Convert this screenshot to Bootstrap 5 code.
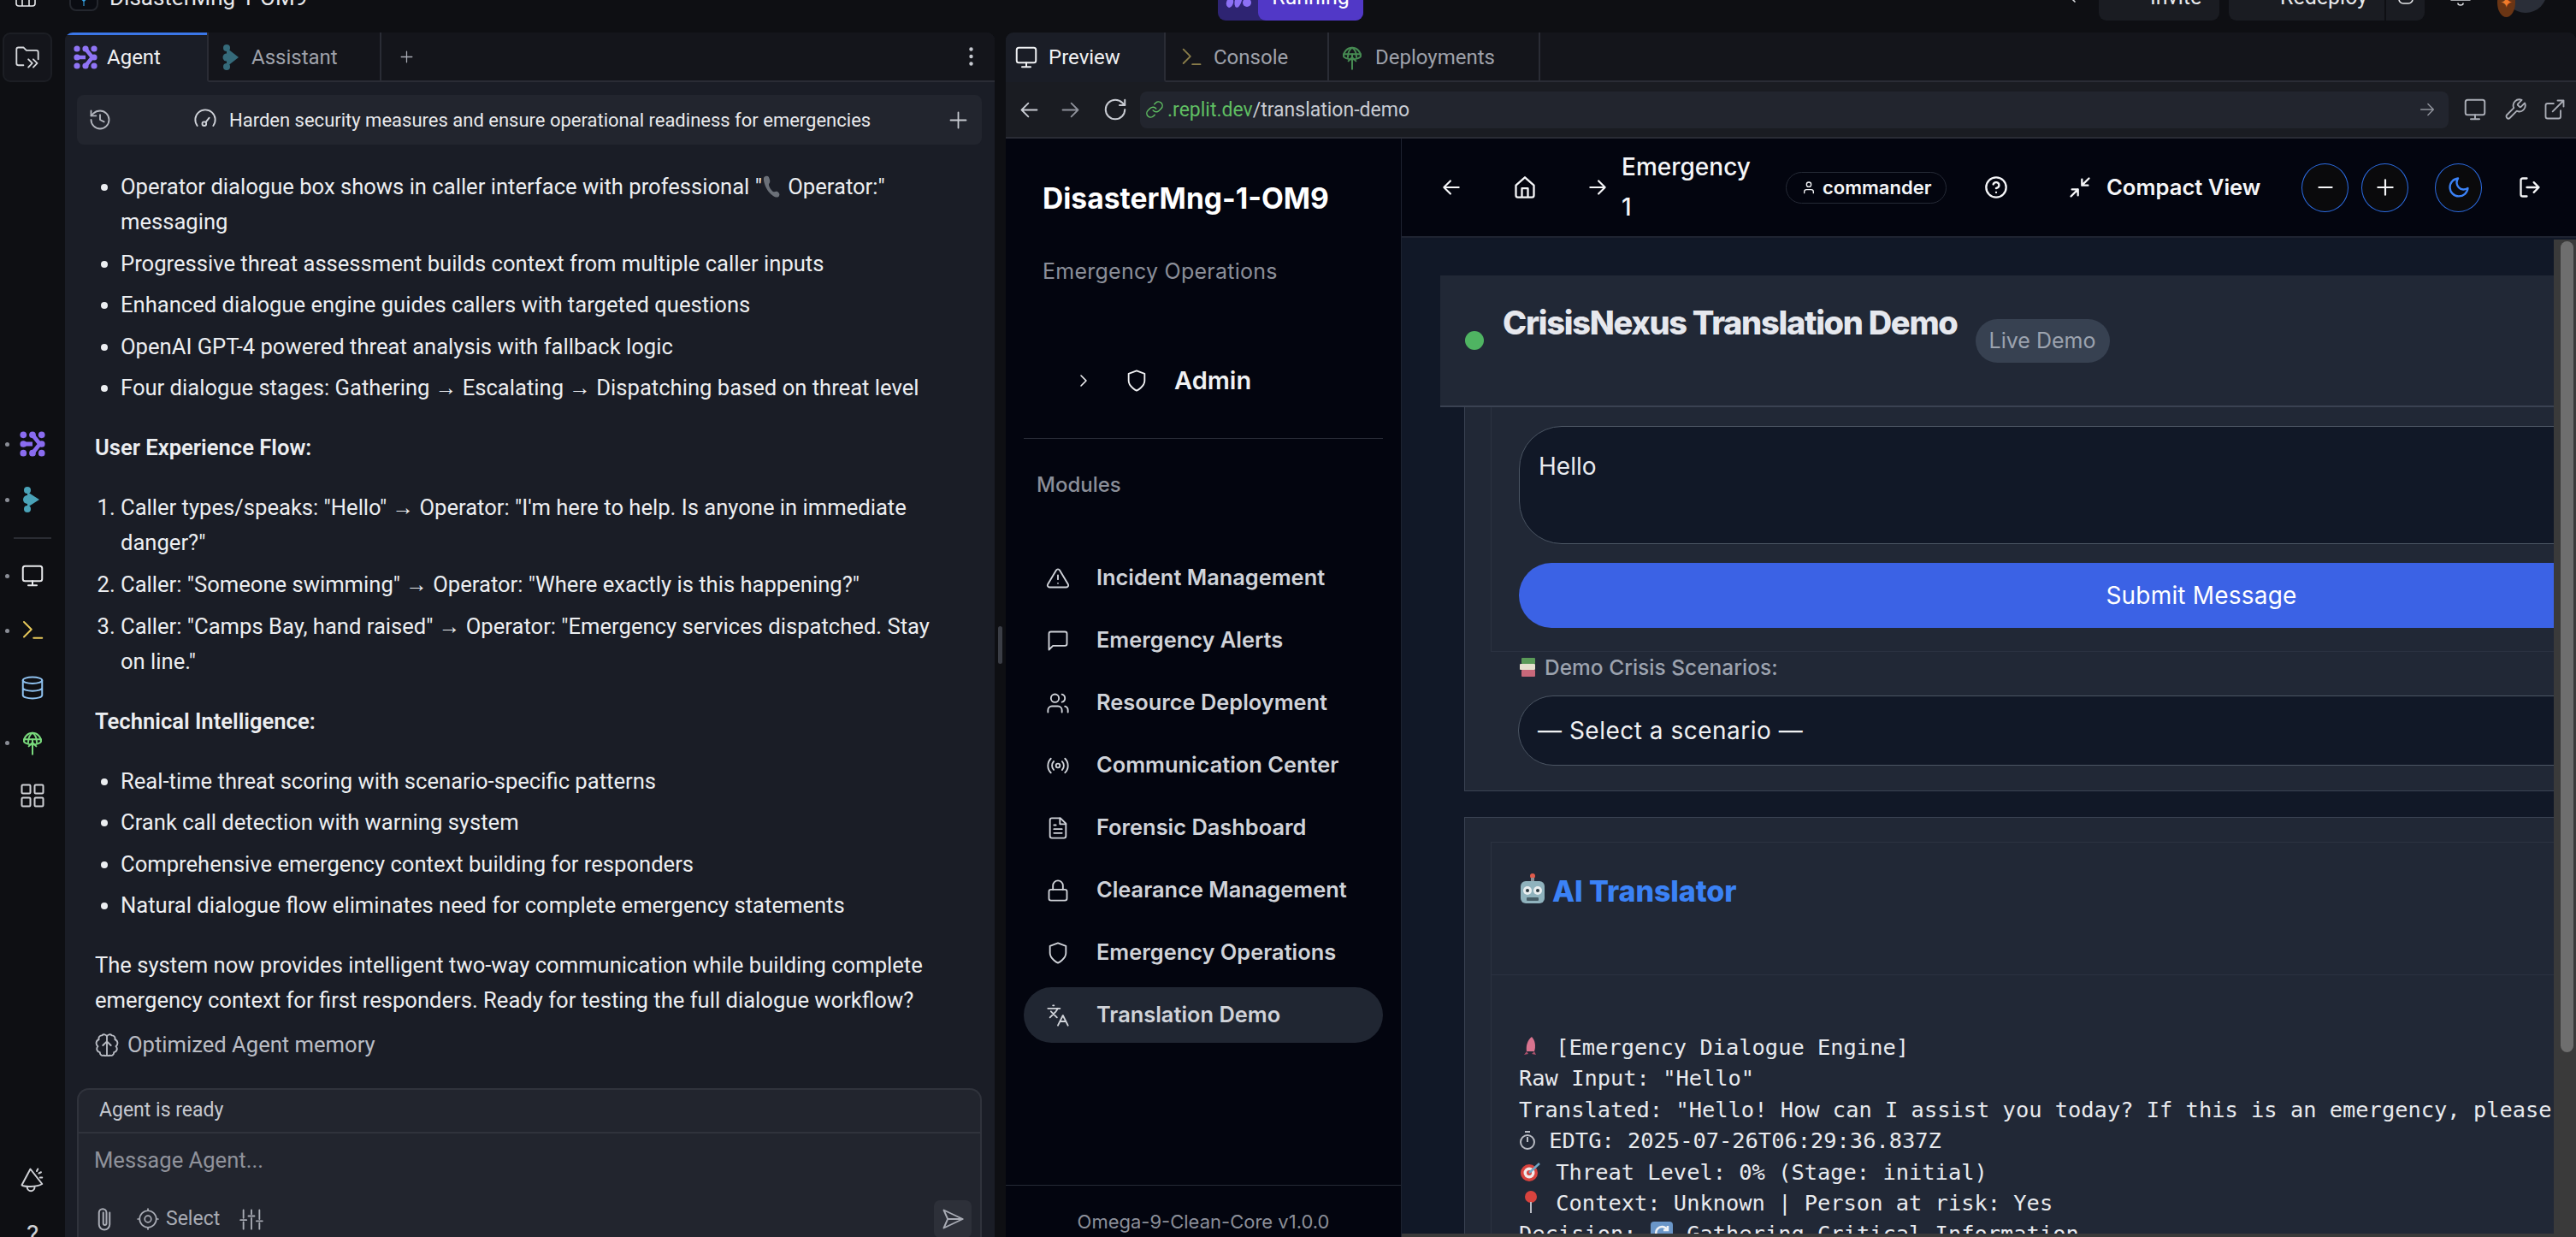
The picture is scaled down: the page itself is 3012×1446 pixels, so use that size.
<!DOCTYPE html>
<html lang="en">
<head>
  <meta charset="UTF-8" />
  <title>DisasterMng-1-OM9</title>
  <link href="https://cdn.jsdelivr.net/npm/bootstrap@5.3.0/dist/css/bootstrap.min.css" rel="stylesheet">
  <style>
    html, body { height: 100%; }
    body { margin: 0; background: #0e0f13; color: #f0f1f3; overflow: hidden; font-family: Roboto, sans-serif; }
    svg.ic { fill: none; stroke: currentColor; stroke-width: 1.6; stroke-linecap: round; stroke-linejoin: round; flex-shrink: 0; display: block; }

    /* replit chrome */
    .topbar { height: 38px; align-items: flex-end; flex-shrink: 0; position: relative; z-index: 2; }
    .topbar-title { font-size: 26px; line-height: 40px; color: #e8e9ec; margin: 0 0 21px 13px; width: 230px; white-space: nowrap; }
    .proj-icon { width: 34px; height: 46px; border-radius: 8px; border: 2px solid #24272e; background: #0a0c12; margin: 0 0 25px 38px; color: #37a6e8; }
    .grid-top { margin-left: 17px; margin-bottom: 24px; color: #e8e9ec; }
    .run-group { margin: 0 0 14px 1066px; display: flex; height: 60px; background: #2e2472; border-radius: 9px; }
    .run-icon { width: 47px; color: #8c70f5; padding-bottom: 15px; }
    .run-btn { width: 123px; background: #5138c7; border-radius: 9px; color: #fff; font-size: 25px; text-align: center; line-height: 66px; }
    .top-right { margin: 0 0 14px 814px; display: flex; align-items: flex-end; }
    .top-btn { height: 60px; background: #1a1c22; border-radius: 9px; color: #e8e9ec; font-size: 25px; line-height: 66px; }
    .rail { width: 76px; flex-shrink: 0; overflow: hidden; }
    .folder-btn { width: 58px; height: 58px; margin-left: 3px; border: 2px solid #1c1e24; border-radius: 9px; background: #14151b; color: #d8dade; flex-shrink: 0; }
    .rail-item { position: relative; height: 30px; width: 76px; flex-shrink: 0; }
    .rail-item.has-dot::before { content: ""; position: absolute; left: 6px; top: 13px; width: 5px; height: 5px; border-radius: 50%; background: #8a8d96; }
    .rail-rule { height: 2px; width: 44px; background: #2a2c33; flex-shrink: 0; }

    .agent-panel { width: 1087px; flex-shrink: 0; background: #1a1d26; border-radius: 9px 9px 0 0; }
    .tab-row { height: 58px; flex-shrink: 0; background: #14151b; font-size: 24px; }
    .tab-cell { height: 58px; border-bottom: 2px solid #2a2c35; border-right: 2px solid #2a2c35; color: #9ea1aa; padding-left: 14px; gap: 13px; padding-top: 2px; }
    .tab-cell.on { background: #1a1d26; border-bottom-color: transparent; color: #f0f1f3; box-shadow: inset 0 3px 0 #3b77e8; }
    .tab-fill { flex: 1; height: 58px; border-bottom: 2px solid #2a2c35; }
    .hist-bar { height: 58px; margin: 15px 15px 0 14px; background: #22252e; border-radius: 8px; font-size: 22px; color: #e8e9ec; flex-shrink: 0; }
    .chat { flex: 1; overflow: hidden; padding: 29px 44px 0 35px; font-size: 25.6px; line-height: 41px; color: #eceef1; }
    .chat ul, .chat ol { margin: 0; padding-left: 30px; }
    .chat li { margin-bottom: 7.6px; }
    .chat p { margin: 0; }
    .chat b { font-weight: 600; }
    .memo { color: #b9bcc4; gap: 10px; margin-top: 11px; }
    .composer { height: 174px; flex-shrink: 0; margin: 0 15px 0 14px; background: #22252e; border: 2px solid #30333c; border-bottom: 0; border-radius: 14px 14px 0 0; font-size: 23px; }
    .composer-status { height: 51px; border-bottom: 2px solid #30333c; padding-left: 24px; color: #c6c9d0; }
    .composer-input { padding: 14px 0 0 18px; color: #8f929b; font-size: 25.6px; line-height: 34px; height: 83px; }
    .composer-tools { padding-left: 18px; color: #a9acb5; gap: 0; }
    .send-btn { position: absolute; right: 10px; bottom: -1px; width: 44px; height: 44px; background: #2d3039; border-radius: 7px; color: #a9acb5; }
    .gutter { width: 13px; flex-shrink: 0; position: relative; }
    .gutter i { position: absolute; left: 4px; top: 694px; width: 5px; height: 44px; background: #3a3d45; border-radius: 3px; }

    .preview-panel { flex: 1; min-width: 0; background: #1a1c22; border-radius: 9px 9px 0 0; overflow: hidden; }
    .addr-row { height: 66px; flex-shrink: 0; border-bottom: 2px solid #2a2c35; color: #c9ccd3; padding-left: 14px; }
    .addr-box { flex: 1; height: 43px; margin-left: 14px; background: #22252e; border-radius: 8px; font-size: 23px; padding: 0 14px 0 6px; }
    .green-host { color: #5fbe62; }
    .addr-tools { gap: 18px; margin: 0 11px 0 16px; color: #a9acb5; }

    /* app in preview */
    .app-side { width: 463px; flex-shrink: 0; background: #03050f; border-right: 1px solid #1d2230; font-family: Inter, sans-serif; }
    .app-brand { font-size: 33.6px; font-weight: 700; color: #fff; margin: 50px 0 0 43px; line-height: 40px; }
    .app-sub { font-size: 25px; color: #8b8f99; margin: 48px 0 0 43px; line-height: 34px; font-weight: 400; letter-spacing: .25px; }
    .admin-row { margin: 90px 21px 0; padding: 0 0 46px 58px; border-bottom: 1px solid #2a2e39; color: #f0f1f3; font-size: 29px; font-weight: 600; height: 89px; }
    .mod-label { margin: 39px 0 0 36px; color: #8b8f99; font-size: 24px; font-weight: 500; line-height: 30px; }
    .side-nav { margin: 61px 21px 0; }
    .side-nav .list-group-item { background: transparent; border: 0; height: 65px; margin-bottom: 8px; border-radius: 33px; padding: 0 0 0 26px; display: flex; align-items: center; color: #d0d3d9; font-size: 25.4px; font-weight: 600; gap: 31px; }
    .side-nav .list-group-item.active { background: #202632; color: #d0d3d9; margin-top: 0; }
    .side-foot { margin-top: auto; height: 61px; flex-shrink: 0; border-top: 1px solid #252a36; text-align: center; color: #8b8f99; font-size: 22px; padding-top: 28px; line-height: 28px; }
    .app-main { flex: 1; min-width: 0; background: #111827; position: relative; overflow: hidden; font-family: Inter, sans-serif; }
    .app-head { height: 116px; background: #03050f; border-bottom: 2px solid #1f2431; color: #f5f6f8; }
    .app-head svg.ic { stroke-width: 2; }
    .crumb { width: 86px; }
    .crumb-text { font-size: 28px; font-weight: 500; line-height: 47px; width: 130px; }
    .user-chip { width: 188px; height: 37px; margin-left: 62px; border: 1px solid #252a36; border-radius: 19px; font-size: 22px; font-weight: 600; padding-left: 18px; gap: 8px; }
    .round-btn { width: 55px; height: 57px; padding: 0; border-radius: 50%; background: #0a0a0c; border: 1.5px solid #2c6be0; color: #f5f6f8; display: flex; align-items: center; justify-content: center; }
    .round-btn:hover { background: #0a0a0c; color: #f5f6f8; border-color: #2c6be0; }
    .compact-text { font-size: 25.6px; font-weight: 600; }
    .scroll-body { height: 1164px; overflow: hidden; padding: 44px 0 0 44px; width: 1347px; }
    .demo-head { height: 154px; width: 1303px; margin-left: 1px; background: #212836; border-bottom: 2px solid #3a4252; padding-left: 29px; }
    .live-dot { width: 22px; height: 22px; border-radius: 50%; background: #4fb462; margin-right: 22px; }
    .demo-title { font-size: 38px; font-weight: 800; color: #e6e8ee; letter-spacing: -1.3px; margin: 0 21px 43px 0; line-height: 46px; }
    .live-badge { background: #374151; color: #9ca3af; font-size: 25px; font-weight: 400; border-radius: 26px; padding: 0; width: 157px; height: 51px; display: flex; align-items: center; justify-content: center; margin-bottom: 0; }
    .demo-card { margin-left: 29px; width: 1275px; background: #212836; border: 1px solid #3a4252; border-top: 0; border-right: 0; overflow: hidden; }
    .form-inner { margin-left: 30px; padding: 22px 0 0 32px; width: 1700px; height: 286px; border-left: 1px solid #2b3241; border-bottom: 1px solid #2b3241; }
    .demo-input { width: 1596px; height: 138px; background: #111827; border: 1px solid #4b5563; border-radius: 50px; color: #e8eaee; font-size: 28px; line-height: 42px; padding: 25px 22px 0; font-family: Inter, sans-serif; resize: none; }
    .demo-input:focus { background: #111827; color: #e8eaee; }
    .demo-submit { display: block; width: 1596px; height: 76px; margin-top: 22px; background: #3b62e5; border: 0; border-radius: 38px; font-size: 28px; letter-spacing: .2px; color: #fff; font-weight: 400; }
    .scen-label { margin: 3px 0 0 62px; font-size: 24.5px; line-height: 30px; color: #9ca3af; font-weight: 500; gap: 7px; }
    .scen-select { width: 1596px; height: 82px; margin: 18px 0 29px 62px; background: #111827; border: 1px solid #4b5563; border-radius: 41px; color: #f0f1f3; font-size: 28px; letter-spacing: .5px; padding-left: 22px; line-height: 80px; }
    .tr-card { margin: 30px 0 0 29px; width: 1275px; height: 520px; background: #212836; border: 1px solid #3a4252; border-right: 0; overflow: hidden; }
    .tr-inner { margin: 28px 0 0 30px; width: 1700px; border-left: 1px solid #2b3241; border-top: 1px solid #2b3241; }
    .tr-head { height: 155px; padding: 32px 0 0 32px; border-bottom: 1px solid #2b3241; gap: 7px; }
    .tr-title { font-size: 34px; font-weight: 800; color: #3b82f6; letter-spacing: -.1px; line-height: 50px; }
    .tr-log { margin: 66px 0 0 32px; font-family: "DejaVu Sans Mono", monospace; font-size: 25.4px; line-height: 36.4px; color: #e8eaee; white-space: nowrap; }
    .tr-log svg { display: inline-block; vertical-align: -4px; }
    .sbar { position: absolute; right: 0; top: 118px; bottom: 0; width: 26px; background: #3a3a3a; }
    .sbar i { position: absolute; left: 8px; top: 2px; width: 15px; height: 948px; background: #6e6e6e; border-radius: 8px; }
    .hbar { position: absolute; left: 0; right: 0; bottom: 0; height: 4px; background: #3a3a3a; }
  </style>
</head>
<body class="d-flex flex-column">

<svg width="0" height="0" class="position-absolute">
  <defs>
    <symbol id="i-monitor" viewBox="0 0 24 24"><rect x="3" y="3" width="18" height="14" rx="2"/><path d="M8 21h8M12 17v4"/></symbol>
    <symbol id="i-term" viewBox="0 0 24 24"><path d="M4 18l7-7-7-7"/><path d="M13 19h8"/></symbol>
    <symbol id="i-deploy" viewBox="0 0 24 24"><path d="M4 11a8 8 0 0 1 16 0c0 1-4 3-8 3s-8-2-8-3z"/><path d="M12 3c-3 2-4 5-4 9M12 3c3 2 4 5 4 9M4 9h16"/><path d="M12 9v14M8.500 15.500L12 12l3.500 3.500"/></symbol>
    <symbol id="i-left" viewBox="0 0 24 24"><path d="M20 12H4M11 19l-7-7 7-7"/></symbol>
    <symbol id="i-right" viewBox="0 0 24 24"><path d="M4 12h16M13 5l7 7-7 7"/></symbol>
    <symbol id="i-plus" viewBox="0 0 24 24"><path d="M4 12h16M12 4v16"/></symbol>
    <symbol id="i-minus" viewBox="0 0 24 24"><path d="M5 12h14"/></symbol>
    <symbol id="i-agent" viewBox="0 0 28 28"><g fill="currentColor"><circle cx="4" cy="4" r="3.600"/><circle cx="14" cy="4" r="3.600"/><circle cx="24" cy="4" r="3.600"/><circle cx="4" cy="14" r="3.600"/><circle cx="24" cy="14" r="3.600"/><circle cx="4" cy="24" r="3.600"/><circle cx="14" cy="24" r="3.600"/><circle cx="24" cy="24" r="3.600"/></g><path d="M14 4l8 10-8 10M4 14h10" fill="none" stroke="currentColor" stroke-width="4.500"/></symbol>
  </defs>
</svg>

<!-- cut off replit top bar -->
<div class="topbar d-flex">
  <svg class="ic grid-top" width="26" height="22" viewBox="0 0 26 22"><path d="M2-8h22v20a3 3 0 0 1-3 3H5a3 3 0 0 1-3-3zM9-8v23M17-8v23"/></svg>
  <div class="proj-icon d-flex align-items-end justify-content-center pb-1"><svg class="ic" width="16" height="16" viewBox="0 0 24 24"><path d="M12 24V2M4 8l8 8 8-8"/></svg></div>
  <div class="topbar-title">DisasterMng-1-OM9</div>
  <div class="run-group">
    <div class="run-icon d-flex align-items-end justify-content-center"><svg width="30" height="16" viewBox="0 0 30 16" fill="currentColor"><ellipse cx="5" cy="10" rx="4" ry="6" transform="rotate(15 5 10)"/><ellipse cx="15" cy="7" rx="4" ry="9" transform="rotate(15 15 7)"/><circle cx="25" cy="10" r="5"/></svg></div>
    <div class="run-btn">Running</div>
  </div>
  <div class="top-right">
    <svg class="ic" style="margin-bottom:17px;color:#d8dade" width="20" height="22" viewBox="0 0 20 22"><circle cx="8" cy="6" r="7"/><path d="M18 17l-5-5"/></svg>
    <div class="top-btn d-flex" style="width:141px;margin-left:26px;padding-left:16px"><svg class="ic" width="26" height="36" viewBox="0 0 26 36"><circle cx="13" cy="14" r="6"/><path d="M4 34v-8a5 5 0 0 1 5-5M22 34v-8a5 5 0 0 0-5-5"/></svg><span style="margin-left:18px">Invite</span></div>
    <div class="top-btn d-flex" style="width:182px;margin-left:11px;padding-left:18px;border-radius:9px 0 0 9px"><svg class="ic" width="26" height="36" viewBox="0 0 26 36"><path d="M13 36V12M7 18l6-6 6 6"/></svg><span style="margin-left:16px">Redeploy</span></div>
    <div class="top-btn d-flex justify-content-center" style="width:45px;margin-left:2px;border-radius:0 9px 9px 0"><svg class="ic" width="20" height="42" viewBox="0 0 20 42" style="margin-top:0"><path d="M2 30v6a5 5 0 0 0 5 5h6a5 5 0 0 0 5-5v-6" transform="translate(0 -1)"/></svg></div>
    <svg class="ic" style="margin:0 0 17px 30px;color:#d8dade" width="24" height="8" viewBox="0 0 24 8"><path d="M1 1h22M9 5a3 2 0 0 0 6 0"/></svg>
    <div class="position-relative" style="width:52px;height:60px;margin-left:34px">
      <div class="position-absolute rounded-circle" style="width:50px;height:50px;background:#2a2e38;left:5px;top:1px"></div>
      <div class="position-absolute rounded-circle d-flex align-items-center justify-content-center" style="width:21px;height:34px;background:#6a3514;left:-3px;top:22px;color:#f07a2a;font-size:18px;line-height:1">✦</div>
    </div>
  </div>
</div>

<div class="d-flex flex-grow-1" style="min-height:0">
  <!-- icon rail -->
  <div class="rail d-flex flex-column">
    <div class="folder-btn d-flex align-items-center justify-content-center">
      <svg class="ic" width="30" height="28" viewBox="0 0 26 24"><path d="M9 20H4a2 2 0 0 1-2-2V4a2 2 0 0 1 2-2h5l3 3h10a2 2 0 0 1 2 2v7"/><path d="M14 16l4 4-4 4M19 16l4 4-4 4" transform="translate(0 -2)"/></svg>
    </div>
    <div class="rail-item has-dot d-flex justify-content-center" style="margin-top:408px;color:#8a6cf0">
      <svg width="30" height="30"><use href="#i-agent"/></svg>
    </div>
    <div class="rail-item has-dot d-flex justify-content-center" style="margin-top:35px;color:#4aa3b8">
      <svg width="24" height="30" viewBox="0 0 24 30" fill="currentColor"><circle cx="6" cy="4" r="4"/><circle cx="6" cy="15" r="5"/><circle cx="6" cy="26" r="4"/><path d="M6 6l14 9-14 9z"/></svg>
    </div>
    <div class="rail-rule" style="margin:29px 0 0 16px"></div>
    <div class="rail-item has-dot d-flex justify-content-center" style="margin-top:28px;color:#e8e9ec"><svg class="ic" width="30" height="30"><use href="#i-monitor"/></svg></div>
    <div class="rail-item has-dot d-flex justify-content-center" style="margin-top:34px;color:#e8c95a"><svg class="ic" width="30" height="30"><use href="#i-term"/></svg></div>
    <div class="rail-item d-flex justify-content-center" style="margin-top:37px;color:#8fc2f0"><svg class="ic" width="30" height="30" viewBox="0 0 24 24"><ellipse cx="12" cy="5" rx="9" ry="3"/><path d="M3 5v14a9 3 0 0 0 18 0V5M3 12a9 3 0 0 0 18 0"/></svg></div>
    <div class="rail-item has-dot d-flex justify-content-center" style="margin-top:34px;color:#79d97c"><svg class="ic" width="30" height="30"><use href="#i-deploy"/></svg></div>
    <div class="rail-item d-flex justify-content-center" style="margin-top:32px;color:#cfd1d6"><svg class="ic" width="30" height="30" viewBox="0 0 24 24"><rect x="2" y="2" width="8" height="8" rx="1"/><rect x="14" y="2" width="8" height="8" rx="1"/><rect x="2" y="14" width="8" height="8" rx="1"/><rect x="14" y="14" width="8" height="8" rx="1"/></svg></div>
    <div class="rail-item d-flex justify-content-center" style="margin-top:419px;color:#cfd1d6"><svg class="ic" width="30" height="30" viewBox="0 0 24 24"><path d="M10 2L2 17c2 2 14 2 19-1z"/><path d="M7 19a3.500 3.500 0 0 0 7 0M17 2l-1 2M20 5l-2 1M21 10h-2"/></svg></div>
    <div class="rail-item d-flex justify-content-center" style="margin-top:34px;color:#cfd1d6;font-size:30px;line-height:30px">?</div>
  </div>

  <!-- agent panel -->
  <div class="agent-panel d-flex flex-column overflow-hidden">
    <div class="tab-row d-flex">
      <div class="tab-cell on d-flex align-items-center" style="width:168px;padding-left:10px;gap:11px;color:#f0f1f3">
        <svg style="color:#8f74f5" width="28" height="28"><use href="#i-agent"/></svg>
        <span>Agent</span>
      </div>
      <div class="tab-cell d-flex align-items-center" style="width:202px;padding-left:16px;gap:14px">
        <svg width="20" height="30" viewBox="0 0 20 30" fill="#356a7a"><circle cx="5" cy="4" r="4"/><circle cx="5" cy="15" r="4.500"/><circle cx="5" cy="26" r="4"/><path d="M5 4l14 11L5 26z"/></svg>
        <span>Assistant</span>
      </div>
      <div class="tab-fill d-flex align-items-center" style="padding-left:20px;color:#a9acb5">
        <svg class="ic" width="19" height="19"><use href="#i-plus"/></svg>
        <svg class="ms-auto" style="margin-right:25px" width="5" height="22" viewBox="0 0 5 22" fill="#c6c9d0"><circle cx="2.500" cy="2.500" r="2.200"/><circle cx="2.500" cy="11" r="2.200"/><circle cx="2.500" cy="19.500" r="2.200"/></svg>
      </div>
    </div>
    <div class="hist-bar d-flex align-items-center">
      <svg class="ic" style="margin-left:13px;color:#b3b6be" width="28" height="28" viewBox="0 0 24 24"><path d="M3 12a9 9 0 1 0 9-9 9.750 9.750 0 0 0-6.740 2.740L3 8"/><path d="M3 3v5h5M12 7v5l4 2"/></svg>
      <svg class="ic" style="margin-left:95px;color:#d0d3d9" width="28" height="28" viewBox="0 0 24 24"><path d="M4 18a10 10 0 1 1 16 0"/><circle cx="11" cy="16" r="2"/><path d="M12.500 14.500L16 10"/></svg>
      <span style="margin-left:14px">Harden security measures and ensure operational readiness for emergencies</span>
      <svg class="ic ms-auto" style="margin-right:14px;color:#c6c9d0" width="27" height="27"><use href="#i-plus"/></svg>
    </div>
    <div class="chat">
      <ul>
        <li>Operator dialogue box shows in caller interface with professional "<svg style="vertical-align:-4px" width="24" height="26" viewBox="0 0 24 26" fill="#6b7078"><path d="M4 1c3-1 4 0 5 4s-1 4-1 6 3 7 5 8 3-1 5 0 3 3 2 5-4 2-7 0S5 17 3 10 2 2 4 1z"/></svg> Operator:" messaging</li>
        <li>Progressive threat assessment builds context from multiple caller inputs</li>
        <li>Enhanced dialogue engine guides callers with targeted questions</li>
        <li>OpenAI GPT-4 powered threat analysis with fallback logic</li>
        <li>Four dialogue stages: Gathering → Escalating → Dispatching based on threat level</li>
      </ul>
      <p style="margin-top:29px"><b>User Experience Flow:</b></p>
      <ol style="margin-top:29px">
        <li>Caller types/speaks: "Hello" → Operator: "I'm here to help. Is anyone in immediate danger?"</li>
        <li>Caller: "Someone swimming" → Operator: "Where exactly is this happening?"</li>
        <li>Caller: "Camps Bay, hand raised" → Operator: "Emergency services dispatched. Stay on line."</li>
      </ol>
      <p style="margin-top:29px"><b>Technical Intelligence:</b></p>
      <ul style="margin-top:29px">
        <li>Real-time threat scoring with scenario-specific patterns</li>
        <li>Crank call detection with warning system</li>
        <li>Comprehensive emergency context building for responders</li>
        <li>Natural dialogue flow eliminates need for complete emergency statements</li>
      </ul>
      <p style="margin-top:29px">The system now provides intelligent two-way communication while building complete emergency context for first responders. Ready for testing the full dialogue workflow?</p>
      <div class="memo d-flex align-items-center">
        <svg class="ic" width="28" height="28" viewBox="0 0 24 24"><path d="M12 22V3a3 3 0 0 0-5-1 3 3 0 0 0-3 4 4 4 0 0 0-1 7 3.500 3.500 0 0 0 2 6 3 3 0 0 0 4 3 3 3 0 0 0 3 0 3 3 0 0 0 3 0 3 3 0 0 0 4-3 3.500 3.500 0 0 0 2-6 4 4 0 0 0-1-7 3 3 0 0 0-3-4 3 3 0 0 0-5 1M8 12l4-4 4 4"/></svg>
        <span>Optimized Agent memory</span>
      </div>
    </div>
    <div class="composer position-relative">
      <div class="composer-status d-flex align-items-center">Agent is ready</div>
      <div class="composer-input">Message Agent...</div>
      <div class="composer-tools d-flex align-items-center">
        <svg class="ic" width="24" height="30" viewBox="0 0 18 24"><path d="M14 6v11a5 5 0 0 1-10 0V6a3.500 3.500 0 0 1 7 0v10a1.500 1.500 0 0 1-3 0V6"/></svg>
        <svg class="ic" style="margin-left:26px" width="26" height="26" viewBox="0 0 24 24"><circle cx="12" cy="12" r="9"/><circle cx="12" cy="12" r="3.500"/><path d="M12 1v2M12 21v2M1 12h2M21 12h2"/></svg>
        <span class="ms-2">Select</span>
        <svg class="ic" style="margin-left:22px" width="30" height="28" viewBox="0 0 24 24"><path d="M4 3v8M4 15v7M12 3v4M12 11v11M20 3v9M20 16v6M1 13h6M9 9h6M17 14h6"/></svg>
      </div>
      <div class="send-btn d-flex align-items-center justify-content-center"><svg class="ic" width="28" height="28" viewBox="0 0 24 24"><path d="M3 3l19 9-19 9 4-9zM7 12h15"/></svg></div>
    </div>
  </div>

  <div class="gutter"><i></i></div>

  <!-- preview panel -->
  <div class="preview-panel d-flex flex-column">
    <div class="tab-row d-flex">
      <div class="tab-cell on d-flex align-items-center" style="width:187px;padding-left:9px;box-shadow:none;gap:11px">
        <svg class="ic" width="30" height="30"><use href="#i-monitor"/></svg><span>Preview</span>
      </div>
      <div class="tab-cell d-flex align-items-center" style="width:191px;padding-left:16px;gap:12px">
        <svg class="ic" style="color:#8a7d4a" width="28" height="28"><use href="#i-term"/></svg><span>Console</span>
      </div>
      <div class="tab-cell d-flex align-items-center" style="width:247px;padding-left:12px;gap:12px">
        <svg class="ic" style="color:#468a52" width="30" height="32"><use href="#i-deploy"/></svg><span>Deployments</span>
      </div>
      <div class="tab-fill"></div>
    </div>
    <div class="addr-row d-flex align-items-center">
      <svg class="ic" width="27" height="27"><use href="#i-left"/></svg>
      <svg class="ic" style="margin-left:21px;color:#8f929b" width="27" height="27"><use href="#i-right"/></svg>
      <svg class="ic" style="margin-left:24px" width="30" height="30" viewBox="0 0 24 24"><path d="M21 12a9 9 0 1 1-9-9c2.520 0 4.930 1 6.740 2.740L21 8"/><path d="M21 3v5h-5"/></svg>
      <div class="addr-box d-flex align-items-center">
        <svg class="ic green-host me-1" width="22" height="24" viewBox="0 0 24 24"><path d="M10 13a5 5 0 0 0 7.540.54l3-3a5 5 0 0 0-7.070-7.070l-1.720 1.710"/><path d="M14 11a5 5 0 0 0-7.540-.54l-3 3a5 5 0 0 0 7.070 7.070l1.710-1.710"/></svg>
        <span style="padding-top:2px"><span class="green-host">.replit.dev</span>/translation-demo</span>
        <svg class="ic ms-auto" style="color:#8f929b" width="22" height="22"><use href="#i-right"/></svg>
      </div>
      <div class="addr-tools d-flex align-items-center">
        <svg class="ic" width="30" height="30"><use href="#i-monitor"/></svg>
        <svg class="ic" width="28" height="28" viewBox="0 0 24 24"><path d="M14.700 6.300a1 1 0 0 0 0 1.400l1.600 1.600a1 1 0 0 0 1.400 0l3.770-3.770a6 6 0 0 1-7.940 7.940l-6.910 6.910a2.120 2.120 0 0 1-3-3l6.910-6.910a6 6 0 0 1 7.940-7.940l-3.760 3.760z"/></svg>
        <svg class="ic" width="28" height="28" viewBox="0 0 24 24"><path d="M18 13v6a2 2 0 0 1-2 2H5a2 2 0 0 1-2-2V8a2 2 0 0 1 2-2h6M15 3h6v6M10 14L21 3"/></svg>
      </div>
    </div>

    <div class="d-flex flex-grow-1" style="min-height:0">
      <div class="app-side d-flex flex-column">
        <div class="app-brand">DisasterMng-1-OM9</div>
        <div class="app-sub">Emergency Operations</div>
        <div class="admin-row d-flex align-items-center">
          <svg class="ic" width="24" height="28" viewBox="0 0 24 24"><path d="M9 18l6-6-6-6"/></svg>
          <svg class="ic" style="margin-left:36px" width="28" height="30" viewBox="0 0 24 24"><path d="M12 22s8-4 8-10V5l-8-3-8 3v7c0 6 8 10 8 10z"/></svg>
          <span style="margin-left:30px">Admin</span>
        </div>
        <div class="mod-label">Modules</div>
        <div class="side-nav list-group">
          <a class="list-group-item"><svg class="ic" width="28" height="28" viewBox="0 0 24 24"><path d="M10.290 3.860L1.820 18a2 2 0 0 0 1.710 3h16.940a2 2 0 0 0 1.710-3L13.710 3.860a2 2 0 0 0-3.420 0zM12 9v4M12 17h.01"/></svg>Incident Management</a>
          <a class="list-group-item"><svg class="ic" width="28" height="28" viewBox="0 0 24 24"><path d="M21 15a2 2 0 0 1-2 2H7l-4 4V5a2 2 0 0 1 2-2h14a2 2 0 0 1 2 2z"/></svg>Emergency Alerts</a>
          <a class="list-group-item"><svg class="ic" width="28" height="28" viewBox="0 0 24 24"><path d="M16 21v-2a4 4 0 0 0-4-4H6a4 4 0 0 0-4 4v2"/><circle cx="9" cy="7" r="4"/><path d="M22 21v-2a4 4 0 0 0-3-3.870M16 3.130a4 4 0 0 1 0 7.750"/></svg>Resource Deployment</a>
          <a class="list-group-item"><svg class="ic" width="28" height="28" viewBox="0 0 24 24"><path d="M4.900 19.100C1 15.200 1 8.800 4.900 4.900M7.800 16.200c-2.300-2.300-2.300-6.100 0-8.500"/><circle cx="12" cy="12" r="2"/><path d="M16.200 7.800c2.300 2.300 2.300 6.100 0 8.500M19.100 4.900C23 8.800 23 15.100 19.100 19"/></svg>Communication Center</a>
          <a class="list-group-item"><svg class="ic" width="28" height="28" viewBox="0 0 24 24"><path d="M14.500 2H6a2 2 0 0 0-2 2v16a2 2 0 0 0 2 2h12a2 2 0 0 0 2-2V7.500L14.500 2z"/><path d="M14 2v6h6M16 13H8M16 17H8M10 9H8"/></svg>Forensic Dashboard</a>
          <a class="list-group-item"><svg class="ic" width="28" height="28" viewBox="0 0 24 24"><rect x="3" y="11" width="18" height="11" rx="2"/><path d="M7 11V7a5 5 0 0 1 10 0v4"/></svg>Clearance Management</a>
          <a class="list-group-item"><svg class="ic" width="28" height="28" viewBox="0 0 24 24"><path d="M12 22s8-4 8-10V5l-8-3-8 3v7c0 6 8 10 8 10z"/></svg>Emergency Operations</a>
          <a class="list-group-item active"><svg class="ic" width="28" height="28" viewBox="0 0 24 24"><path d="M5 8l6 6M4 14l6-6 2-3M2 5h12M7 2h1M22 22l-5-10-5 10M14 18h6"/></svg>Translation Demo</a>
        </div>
        <div class="side-foot">Omega-9-Clean-Core v1.0.0</div>
      </div>

      <div class="app-main">
        <div class="app-head d-flex align-items-center">
          <div class="crumb d-flex justify-content-center" style="margin-left:15px"><svg class="ic" width="26" height="26"><use href="#i-left"/></svg></div>
          <div class="crumb d-flex justify-content-center"><svg class="ic" width="28" height="28" viewBox="0 0 24 24"><path d="M3 10l9-8 9 8v10a2 2 0 0 1-2 2H5a2 2 0 0 1-2-2zM9 22v-9h6v9"/></svg></div>
          <div class="crumb d-flex justify-content-center" style="width:84px"><svg class="ic" width="26" height="26"><use href="#i-right"/></svg></div>
          <div class="crumb-text" style="margin-left:-14px">Emergency 1</div>
          <div class="user-chip d-flex align-items-center"><svg class="ic" width="16" height="18" viewBox="0 0 24 24"><path d="M20 22v-2a4 4 0 0 0-4-4H8a4 4 0 0 0-4 4v2"/><circle cx="12" cy="7" r="4"/></svg>commander</div>
          <svg class="ic" style="margin-left:44px" width="28" height="28" viewBox="0 0 24 24"><circle cx="12" cy="12" r="10"/><path d="M9.090 9a3 3 0 0 1 5.830 1c0 2-3 3-3 3M12 17h.01"/></svg>
          <svg class="ic" style="margin-left:70px" width="28" height="28" viewBox="0 0 24 24"><path d="M4 14h6v6M20 10h-6V4M14 10l7-7M3 21l7-7"/></svg>
          <span class="compact-text" style="margin-left:17px;width:178px;white-space:nowrap">Compact View</span>
          <button class="btn round-btn" style="margin-left:50px"><svg class="ic" width="26" height="26"><use href="#i-minus"/></svg></button>
          <button class="btn round-btn" style="margin-left:15px"><svg class="ic" width="26" height="26"><use href="#i-plus"/></svg></button>
          <button class="btn round-btn" style="margin-left:31px;color:#3b82f6"><svg class="ic" width="28" height="28" viewBox="0 0 24 24"><path d="M21 12.790A9 9 0 1 1 11.210 3 7 7 0 0 0 21 12.790z"/></svg></button>
          <svg class="ic" style="margin-left:42px" width="28" height="28" viewBox="0 0 24 24"><path d="M9 21H5a2 2 0 0 1-2-2V5a2 2 0 0 1 2-2h4M16 17l5-5-5-5M21 12H9"/></svg>
        </div>
        <div class="scroll-body">
          <div class="demo-head d-flex align-items-center">
            <span class="live-dot"></span>
            <h1 class="demo-title">CrisisNexus Translation Demo</h1>
            <span class="badge live-badge">Live Demo</span>
          </div>
          <div class="demo-card">
            <div class="form-inner">
              <textarea class="demo-input form-control">Hello</textarea>
              <button class="btn demo-submit">Submit Message</button>
            </div>
            <div class="scen-label d-flex align-items-center">
              <svg width="24" height="28" viewBox="0 0 24 28"><rect x="4" y="3" width="16" height="7" rx="1" fill="#5a9a58"/><rect x="2" y="10" width="18" height="7" rx="1" fill="#e6e0cf"/><rect x="4" y="17" width="16" height="8" rx="1" fill="#c8687a"/></svg>
              <span>Demo Crisis Scenarios:</span>
            </div>
            <div class="scen-select">— Select a scenario —</div>
          </div>
          <div class="tr-card">
            <div class="tr-inner">
              <div class="tr-head d-flex align-items-start">
                <svg class="mt-1" width="32" height="40" viewBox="0 0 32 40"><circle cx="16" cy="3" r="3" fill="#e05a4a"/><rect x="14" y="5" width="4" height="5" fill="#8a8f96"/><rect x="2" y="9" width="28" height="26" rx="6" fill="#8fb2bd"/><circle cx="10" cy="20" r="5" fill="#e9eef0"/><circle cx="22" cy="20" r="5" fill="#e9eef0"/><circle cx="10" cy="20" r="2" fill="#2b3a42"/><circle cx="22" cy="20" r="2" fill="#2b3a42"/><rect x="9" y="28" width="14" height="4" rx="1" fill="#465c66"/></svg>
                <span class="tr-title">AI Translator</span>
              </div>
              <div class="tr-log">
                <div><svg width="28" height="28" viewBox="0 0 28 28"><path d="M15 3c4 4 5 11 3 17H9C8 13 10 7 15 3z" fill="#d9748f"/><path d="M9 20l-3 4 5-1M18 20l2 4-5-1" fill="#a84f6a"/></svg> [Emergency Dialogue Engine]</div>
                <div>Raw Input: "Hello"</div>
                <div>Translated: "Hello! How can I assist you today? If this is an emergency, please tell me what is happening."</div>
                <div><svg width="20" height="26" viewBox="0 0 20 26" fill="none" stroke="#b9bcc4" stroke-width="2"><circle cx="10" cy="15" r="8"/><path d="M10 15V9M7 3h6"/></svg> EDTG: 2025-07-26T06:29:36.837Z</div>
                <div><svg width="28" height="28" viewBox="0 0 28 28"><circle cx="12" cy="16" r="10" fill="#d8433e"/><circle cx="12" cy="16" r="6.500" fill="#f0eaea"/><circle cx="12" cy="16" r="3" fill="#d8433e"/><path d="M12 16L24 5" stroke="#6fa7c7" stroke-width="2.500"/></svg> Threat Level: 0% (Stage: initial)</div>
                <div><svg width="28" height="28" viewBox="0 0 28 28"><circle cx="14" cy="8" r="7" fill="#d8433e"/><path d="M14 14v13" stroke="#b9bcc4" stroke-width="2"/></svg> Context: Unknown | Person at risk: Yes</div>
                <div>Decision: <svg width="28" height="28" viewBox="0 0 28 28"><rect x="1" y="1" width="26" height="26" rx="4" fill="#6a96c8"/><path d="M20 10a7 7 0 1 0 1 6M21 6v5h-5" fill="none" stroke="#f0f2f5" stroke-width="2.500"/></svg> Gathering Critical Information</div>
              </div>
            </div>
          </div>
        </div>
        <div class="sbar"><i></i></div>
        <div class="hbar"></div>
      </div>
    </div>
  </div>
</div>
<script src="https://cdn.jsdelivr.net/npm/bootstrap@5.3.0/dist/js/bootstrap.bundle.min.js"></script>
</body>
</html>
